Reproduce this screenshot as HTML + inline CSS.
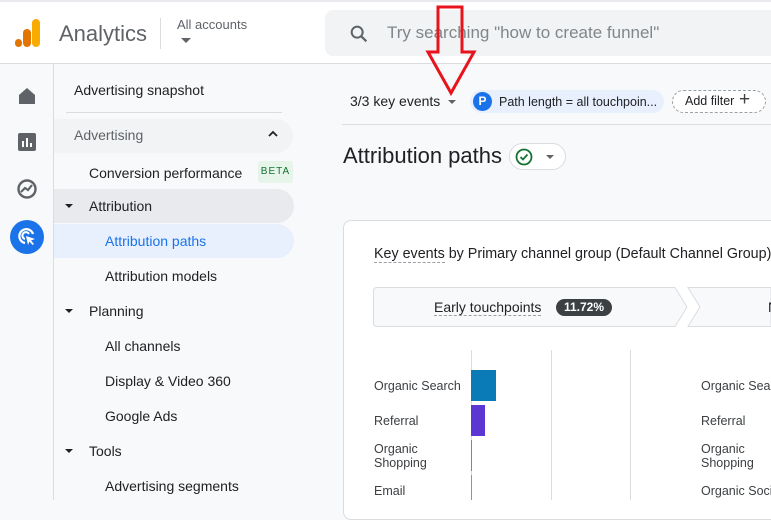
<!DOCTYPE html>
<html><head><meta charset="utf-8"><style>
*{margin:0;padding:0;box-sizing:border-box}
body{width:771px;height:500px;overflow:hidden;background:#f8f9fa;font-family:"Liberation Sans",Arial,sans-serif;color:#202124;position:relative}
.a{position:absolute;white-space:nowrap}
.nav{font-size:14px;color:#202124}
</style></head><body>
<!-- header -->
<div class="a" style="left:0;top:0;width:771px;height:64px;background:#fff;border-top:2px solid #e8eaed;border-bottom:1px solid #dadce0"></div>
<div class="a" style="left:15px;top:39px;width:7px;height:8px;border-radius:4px;background:#e37400"></div>
<div class="a" style="left:23px;top:29px;width:8px;height:18px;border-radius:4px;background:#e37400"></div>
<div class="a" style="left:32px;top:19px;width:8px;height:28px;border-radius:4px;background:#f9ab00"></div>
<div class="a" style="left:59px;top:21px;font-size:22px;color:#5f6368">Analytics</div>
<div class="a" style="left:160px;top:18px;width:1px;height:31px;background:#dadce0"></div>
<div class="a" style="left:177px;top:17px;font-size:13px;color:#5f6368">All accounts</div>
<div class="a" style="left:181px;top:38px;width:0;height:0;border-left:5px solid transparent;border-right:5px solid transparent;border-top:5px solid #5f6368"></div>
<div class="a" style="left:325px;top:10px;width:460px;height:46px;background:#f1f3f4;border-radius:8px"></div>
<svg class="a" style="left:348px;top:23px" width="22" height="22" viewBox="0 0 24 24"><circle cx="10" cy="10" r="6" fill="none" stroke="#5f6368" stroke-width="2.2"/><path d="M14.5 14.5L20 20" stroke="#5f6368" stroke-width="2.4"/></svg>
<div class="a" style="left:387px;top:23px;font-size:17px;color:#80868b">Try searching "how to create funnel"</div>
<!-- rail -->
<div class="a" style="left:53px;top:64px;width:1px;height:436px;background:#dadce0"></div>
<svg class="a" style="left:17px;top:86px" width="20" height="20" viewBox="0 0 20 20"><path d="M2 9L10 2L18 9V18H2Z" fill="#5f6368"/></svg>
<svg class="a" style="left:18px;top:133px" width="18" height="18" viewBox="0 0 18 18"><rect width="18" height="18" rx="2" fill="#5f6368"/><rect x="4" y="8" width="2" height="6" fill="#fff"/><rect x="8" y="5" width="2" height="9" fill="#fff"/><rect x="12" y="10" width="2" height="4" fill="#fff"/></svg>
<svg class="a" style="left:16px;top:178px" width="22" height="22" viewBox="0 0 22 22"><circle cx="11" cy="11" r="8.5" fill="none" stroke="#5f6368" stroke-width="2.4"/><path d="M5 14L9 10L12 12L16 7" fill="none" stroke="#5f6368" stroke-width="2.2"/></svg>
<div class="a" style="left:10px;top:220px;width:34px;height:34px;border-radius:50%;background:#1a73e8"></div>
<svg class="a" style="left:15px;top:225px" width="24" height="24" viewBox="0 0 24 24"><path d="M18 9A7 7 0 1 0 10 18" fill="none" stroke="#fff" stroke-width="2.2"/><path d="M14 9A3.5 3.5 0 1 0 10 14" fill="none" stroke="#fff" stroke-width="2"/><path d="M11 11L20 14L16 15.5L19 19L17.5 20L14.5 16.5L13 20Z" fill="#fff"/></svg>
<!-- nav -->
<div class="a nav" style="left:74px;top:82px">Advertising snapshot</div>
<div class="a" style="left:66px;top:112px;width:216px;height:1px;background:#dadce0"></div>
<div class="a" style="left:54px;top:119px;width:239px;height:34px;background:#f1f3f4;border-radius:0 17px 17px 0"></div>
<div class="a nav" style="left:74px;top:127px;color:#5f6368">Advertising</div>
<svg class="a" style="left:267px;top:129px" width="12" height="10" viewBox="0 0 12 10"><path d="M2 7L6 3L10 7" fill="none" stroke="#202124" stroke-width="1.8"/></svg>
<div class="a nav" style="left:89px;top:165px">Conversion performance</div>
<div class="a" style="left:258px;top:161px;width:35px;height:22px;background:#e6f4ea;border-radius:3px;font-size:10px;color:#137333;letter-spacing:1px;text-align:center;line-height:22px">BETA</div>
<div class="a" style="left:54px;top:189px;width:240px;height:34px;background:#e8eaed;border-radius:0 17px 17px 0"></div>
<div class="a" style="left:65px;top:204px;border-left:4px solid transparent;border-right:4px solid transparent;border-top:4px solid #202124"></div>
<div class="a nav" style="left:89px;top:198px">Attribution</div>
<div class="a" style="left:54px;top:224px;width:240px;height:34px;background:#e8f0fe;border-radius:0 17px 17px 0"></div>
<div class="a nav" style="left:105px;top:233px;color:#1a73e8">Attribution paths</div>
<div class="a nav" style="left:105px;top:268px">Attribution models</div>
<div class="a" style="left:65px;top:309px;border-left:4px solid transparent;border-right:4px solid transparent;border-top:4px solid #202124"></div>
<div class="a nav" style="left:89px;top:303px">Planning</div>
<div class="a nav" style="left:105px;top:338px">All channels</div>
<div class="a nav" style="left:105px;top:373px">Display &amp; Video 360</div>
<div class="a nav" style="left:105px;top:408px">Google Ads</div>
<div class="a" style="left:65px;top:449px;border-left:4px solid transparent;border-right:4px solid transparent;border-top:4px solid #202124"></div>
<div class="a nav" style="left:89px;top:443px">Tools</div>
<div class="a nav" style="left:105px;top:478px">Advertising segments</div>
<!-- filters -->
<div class="a" style="left:350px;top:93px;font-size:14px">3/3 key events</div>
<div class="a" style="left:448px;top:100px;border-left:4px solid transparent;border-right:4px solid transparent;border-top:4px solid #5f6368"></div>
<div class="a" style="left:470px;top:90px;width:194px;height:23px;background:#e8f0fe;border-radius:12px"></div>
<div class="a" style="left:473px;top:92px;width:19px;height:19px;border-radius:50%;background:#1a73e8;color:#fff;font-size:12px;font-weight:bold;text-align:center;line-height:19px">P</div>
<div class="a" style="left:499px;top:95px;font-size:12.5px">Path length = all touchpoin...</div>
<div class="a" style="left:672px;top:90px;width:94px;height:23px;border:1px dashed #9aa0a6;border-radius:12px;background:#fff"></div>
<div class="a" style="left:685px;top:94px;font-size:12.5px">Add filter</div>
<div class="a" style="left:739px;top:89px;font-size:19px;color:#3c4043">+</div>
<div class="a" style="left:342px;top:124px;width:429px;height:1px;background:#dadce0"></div>
<div class="a" style="left:343px;top:143px;font-size:22px">Attribution paths</div>
<div class="a" style="left:509px;top:143px;width:57px;height:27px;border:1px solid #dadce0;border-radius:14px;background:#fff"></div>
<svg class="a" style="left:515px;top:148px" width="18" height="18" viewBox="0 0 18 18"><circle cx="9" cy="9" r="7.5" fill="none" stroke="#137333" stroke-width="1.8"/><path d="M5.5 9L8 11.5L12.5 6.5" fill="none" stroke="#137333" stroke-width="1.8"/></svg>
<div class="a" style="left:546px;top:155px;border-left:4px solid transparent;border-right:4px solid transparent;border-top:4px solid #5f6368"></div>
<!-- card -->
<div class="a" style="left:343px;top:220px;width:440px;height:300px;background:#fff;border:1px solid #dadce0;border-radius:8px"></div>
<div class="a" style="left:374px;top:246px;font-size:14.3px"><span style="border-bottom:1px dashed #9aa0a6">Key events</span> by Primary channel group (Default Channel Group)</div>
<svg class="a" style="left:373px;top:287px" width="398" height="40" viewBox="0 0 398 40"><path d="M4 .5H302L314 20L302 39.5H4Q.5 39.5 .5 36V4Q.5 .5 4 .5Z" fill="#f8f9fa" stroke="#dadce0"/><path d="M315 .5H398V39.5H315L327 20Z" fill="#f8f9fa" stroke="#dadce0"/></svg>
<div class="a" style="left:434px;top:299px;font-size:14px;border-bottom:1px dashed #9aa0a6">Early touchpoints</div>
<div class="a" style="left:556px;top:299px;width:56px;height:17px;border-radius:9px;background:#3c4043;color:#fff;font-size:12px;font-weight:bold;text-align:center;line-height:17px">11.72%</div>
<div class="a" style="left:768px;top:299px;font-size:14px">N</div>
<div class="a" style="left:471px;top:350px;width:1px;height:150px;background:#dadce0"></div>
<div class="a" style="left:551px;top:350px;width:1px;height:150px;background:#dadce0"></div>
<div class="a" style="left:630px;top:350px;width:1px;height:150px;background:#dadce0"></div>
<div class="a" style="left:471px;top:370px;width:25px;height:31px;background:#0b7bb8"></div>
<div class="a" style="left:471px;top:405px;width:14px;height:31px;background:#5b36d2"></div>
<div class="a" style="left:471px;top:440px;width:1px;height:31px;background:#80868b"></div>
<div class="a" style="left:471px;top:475px;width:1px;height:25px;background:#8e85f0"></div>
<div style="font-size:12.5px;line-height:14px;color:#3c4043">
<div class="a" style="left:374px;top:379px">Organic Search</div>
<div class="a" style="left:374px;top:414px">Referral</div>
<div class="a" style="left:374px;top:442px">Organic<br>Shopping</div>
<div class="a" style="left:374px;top:484px">Email</div>
<div class="a" style="left:701px;top:379px">Organic Search</div>
<div class="a" style="left:701px;top:414px">Referral</div>
<div class="a" style="left:701px;top:442px">Organic<br>Shopping</div>
<div class="a" style="left:701px;top:484px">Organic Social</div>
</div>
<!-- red arrow -->
<svg class="a" style="left:425px;top:5px" width="55" height="92" viewBox="0 0 55 92"><path d="M13 2H37V47H49L26 88L3 47H13Z" fill="none" stroke="#e8141c" stroke-width="3" stroke-linejoin="miter"/></svg>
</body></html>
